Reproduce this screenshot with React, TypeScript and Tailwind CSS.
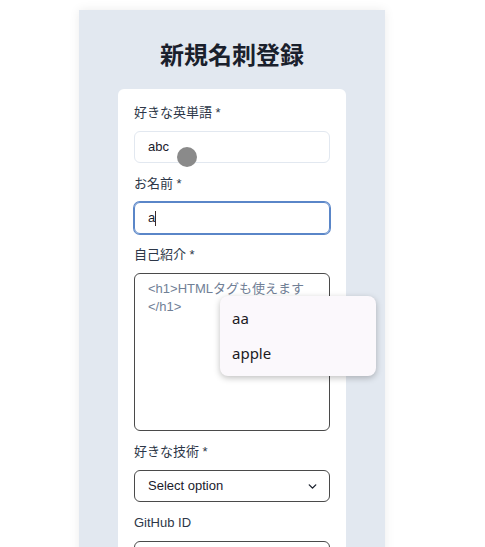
import { ChevronDown } from "lucide-react";

const font = { fontFamily: '"Liberation Sans", "Noto Sans CJK JP", sans-serif' };

function Label({ text }: { text: string }) {
  return <p className="text-[13px] leading-5 text-[#2d3748] mb-2">{text}</p>;
}

function App() {
  return (
    <div className="relative w-[485px] h-[547px] overflow-hidden bg-white" style={font}>
      {/* Panel */}
      <div className="ml-[79px] mt-[10px] w-[306px] h-[560px] bg-[#e2e8f0] shadow-[0_0_10px_rgba(0,0,0,0.08)] pt-[30px] flex flex-col items-center">
        <h1 className="text-[24px] leading-8 font-bold text-[#1a202c]">新規名刺登録</h1>

        {/* Card */}
        <div className="mt-[17px] w-[228px] bg-white rounded-md px-4 pt-[14px] pb-4 flex flex-col gap-[11px]">
          <div>
            <Label text="好きな英単語 *" />
            <div className="relative h-8 border border-[#e2e8f0] rounded-md px-[13px] flex items-center text-[13px] text-[#1a202c]">
              abc
              <span className="absolute left-[42px] top-[15px] w-5 h-5 rounded-full bg-[#8a8a8a]" />
            </div>
          </div>

          <div>
            <Label text="お名前 *" />
            <div className="h-8 border border-[#5a86c8] shadow-[0_0_0_1px_#5a86c8] rounded-md px-[13px] flex items-center text-[13px] text-[#1a202c]">
              a<span className="w-px h-[15px] bg-[#3a2a2a]" />
            </div>
          </div>

          <div>
            <Label text="自己紹介 *" />
            <div className="h-[158px] border border-[#4a4a4a] rounded-md px-[13px] py-[6px] text-[13px] leading-[18px] text-[#718096]">
              &lt;h1&gt;HTMLタグも使えます&lt;/h1&gt;
            </div>
          </div>

          <div>
            <Label text="好きな技術 *" />
            <div className="h-8 border border-[#4a4a4a] rounded-md pl-[13px] pr-[10px] flex items-center justify-between text-[13px] text-[#1a202c]">
              <span>Select option</span>
              <ChevronDown size={13} strokeWidth={2.5} />
            </div>
          </div>

          <div>
            <Label text="GitHub ID" />
            <div className="h-8 border border-[#4a4a4a] rounded-md" />
          </div>
        </div>
      </div>

      {/* Autocomplete popup */}
      <div
        className="absolute left-[220px] top-[296px] w-[156px] h-[80px] rounded-lg bg-[#fbf8fc] shadow-[0_2px_6px_rgba(0,0,0,0.25)] flex flex-col justify-center px-3 text-[15px] text-[#1c1b1f]"
        style={{ fontFamily: '"Noto Sans", "DejaVu Sans", sans-serif' }}
      >
        <div className="h-[35px] flex items-center">aa</div>
        <div className="h-[35px] flex items-center">apple</div>
      </div>
    </div>
  );
}

export default App;
